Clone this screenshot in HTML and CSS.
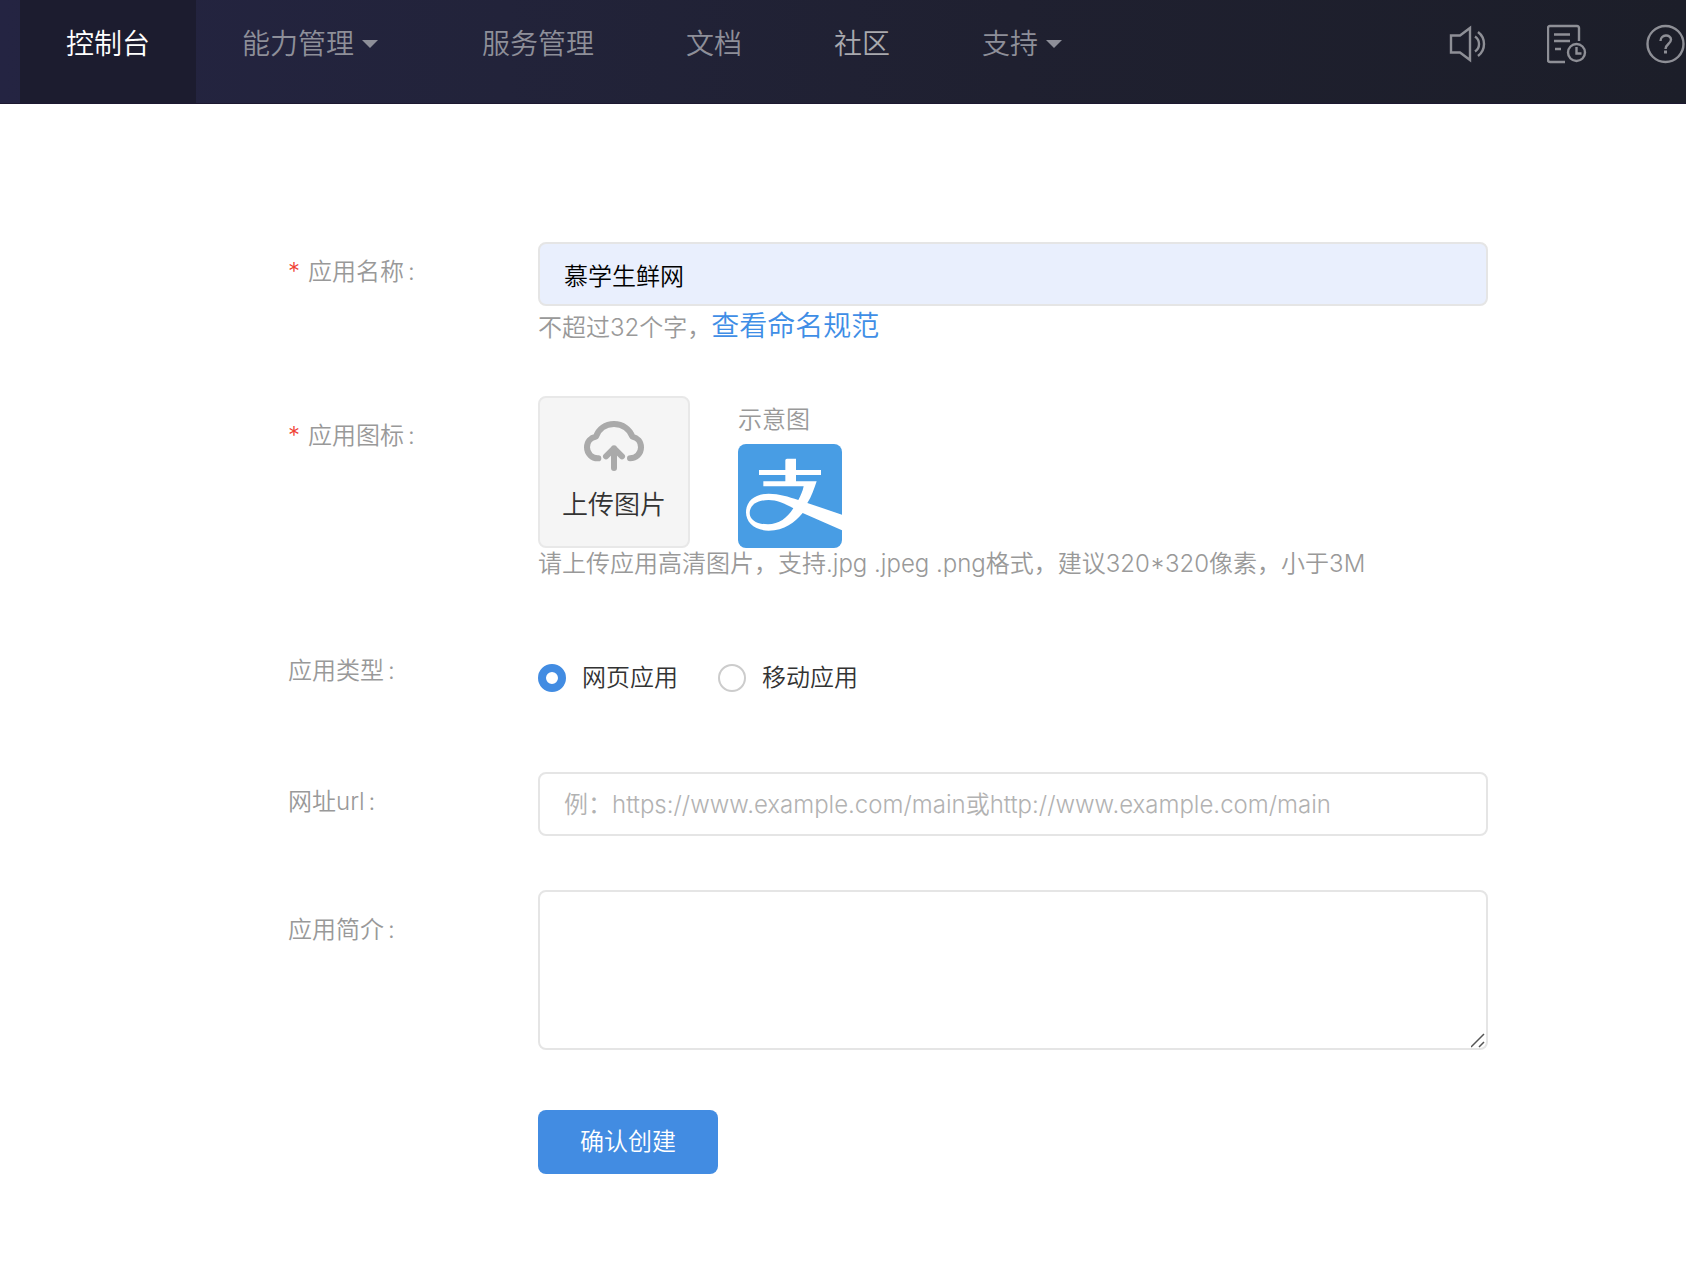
FILE: index.html
```html
<!DOCTYPE html>
<html lang="zh-CN">
<head>
<meta charset="utf-8">
<meta name="viewport" content="width=device-width, initial-scale=1">
<title>创建应用</title>
<link rel="stylesheet" href="styles.css">
</head>
<body>
<header class="topbar">
  <nav class="nav">
    <a class="nav-item active" href="#">控制台</a>
    <a class="nav-item has-menu" href="#">能力管理<span class="caret"></span></a>
    <a class="nav-item" href="#">服务管理</a>
    <a class="nav-item" href="#">文档</a>
    <a class="nav-item bright" href="#">社区</a>
    <a class="nav-item has-menu" href="#">支持<span class="caret"></span></a>
  </nav>
  <div class="tools">
    <button class="tool" type="button" aria-label="公告">
      <svg viewBox="0 0 40 40" fill="none" stroke="currentColor" stroke-width="2.4">
        <path d="M2 11.5H11L21 4V36L11 28.5H2Z"/>
        <path d="M26 12.500A9 9 0 0 1 26 27.500M29 8A15 15 0 0 1 29 32"/>
      </svg>
    </button>
    <button class="tool" type="button" aria-label="工单">
      <svg viewBox="0 0 40 40" fill="none" stroke="currentColor" stroke-width="2.4">
        <path d="M32 17V4Q32 2 30 2H3Q1 2 1 4V36Q1 38 3 38H18" />
        <path d="M7 10.500H23M7 17H23M8 25H14"/>
        <circle cx="29.500" cy="28.500" r="8.500"/>
        <path d="M29.500 23V29.500H34.500"/>
      </svg>
    </button>
    <button class="tool" type="button" aria-label="帮助">
      <svg viewBox="0 0 40 40" fill="none" stroke="currentColor" stroke-width="2.4">
        <circle cx="20.500" cy="20" r="18"/>
        <path d="M15.500 17C15.500 10 26 10 26 15.500C26 20 20.500 20 20.500 25"/>
        <path d="M20.500 26.500V29.500" stroke-width="3"/>
      </svg>
    </button>
  </div>
</header>

<main>
  <form class="form">
    <div class="row row-name">
      <label class="label" for="name"><span class="star">*</span>应用名称<span class="colon">:</span></label>
      <div class="field">
        <input class="input filled" id="name" type="text" value="慕学生鲜网">
        <p class="hint hint-name">不超过32个字，<a class="link" href="#">查看命名规范</a></p>
      </div>
    </div>

    <div class="row row-icon">
      <label class="label low" for="upload"><span class="star">*</span>应用图标<span class="colon">:</span></label>
      <div class="field">
        <div class="pictures">
          <button class="upload" id="upload" type="button">
            <svg class="cloud" viewBox="0 0 180 150" fill="none" stroke="currentColor" stroke-width="18" stroke-linecap="round" stroke-linejoin="round">
              <path d="M43 112C24 113 9 98 9 79C9 62 20 50 36 47C44 23 64 9 90 9C116 9 138 25 145 47C160 50 171 62 171 79C171 98 157 112 138 112"/>
              <path d="M90 141V82M66 106L90 82L114 106"/>
            </svg>
            <span>上传图片</span>
          </button>
          <figure class="sample">
            <figcaption>示意图</figcaption>
            <svg class="logo" viewBox="0 0 312 312" role="img" aria-label="示意图">
              <rect width="312" height="312" fill="#489de4"/>
              <path fill="#fff" d="M142 49Q142 44 147 44H174V78H249V93H174V112H236C228 135 221 158 208 177L312 212V259L194 207C170 235 140 260 92 260C50 260 24 235 24 205C24 172 50 149 92 149C125 149 150 158 181 168C188 155 194 142 197 127H76V112H142V93H63V78H142Z"/>
              <path fill="#489de4" d="M166 193C140 178 115 168 92 168C56 168 35 184 35 207C35 229 58 241 90 241C122 241 148 222 166 193Z"/>
            </svg>
          </figure>
        </div>
        <p class="hint">请上传应用高清图片，支持.jpg .jpeg .png格式，建议320*320像素，小于3M</p>
      </div>
    </div>

    <div class="row row-type" role="radiogroup" aria-labelledby="type-label">
      <span class="label" id="type-label">应用类型<span class="colon">:</span></span>
      <div class="field choices">
        <label class="choice"><input class="radio" type="radio" name="type" checked>网页应用</label>
        <label class="choice"><input class="radio" type="radio" name="type">移动应用</label>
      </div>
    </div>

    <div class="row row-url">
      <label class="label" for="url">网址url<span class="colon">:</span></label>
      <div class="field">
        <input class="input" id="url" type="text" placeholder="例：https://www.example.com/main或http://www.example.com/main">
      </div>
    </div>

    <div class="row row-intro">
      <label class="label low" for="intro">应用简介<span class="colon">:</span></label>
      <div class="field">
        <textarea class="input area" id="intro"></textarea>
      </div>
    </div>

    <div class="row">
      <div class="label"></div>
      <button class="submit" type="submit">确认创建</button>
    </div>
  </form>
</main>
</body>
</html>
```

FILE: styles.css
```css
* {
  box-sizing: border-box;
}

body {
  margin: 0;
  background: #fff;
  color: #999;
  font-family: Inter, "Noto Sans CJK SC", sans-serif;
  font-size: 24px;
  font-weight: 350;
  line-height: 32px;
}

button,
input,
textarea {
  font: inherit;
}

p,
figure {
  margin: 0;
}

a {
  text-decoration: none;
}

/* Top bar */

.topbar {
  display: flex;
  justify-content: space-between;
  height: 104px;
  padding-left: 20px;
  border-bottom: 1px solid #1c1830;
  background: linear-gradient(90deg, #242442 0, #22233a 30%, #1f2030 60%, #1c1e29 100%);
  overflow: hidden;
}

.nav {
  display: flex;
}

.nav-item {
  display: flex;
  align-items: center;
  padding: 0 46px 16px;
  color: #8e8f99;
  font-size: 28px;
  line-height: 40px;
  white-space: nowrap;
}

.nav-item.active {
  background: #1c1c2f;
  color: #fff;
}

.nav-item.bright {
  color: #a9a9ae;
}

.nav-item.has-menu {
  padding-right: 58px;
}

.caret {
  margin-left: 8px;
  border: 8px solid transparent;
  border-top-color: currentColor;
  border-bottom: 0;
}

.tools {
  display: flex;
  gap: 58px;
  padding: 0 1px 16px 0;
}

.tool {
  display: flex;
  align-items: center;
  padding: 0;
  border: 0;
  background: none;
  color: #8e8f96;
}

.tool svg {
  width: 40px;
  height: 40px;
}

/* Form */

.form {
  padding: 138px 198px 104px 288px;
}

.row {
  display: flex;
  align-items: flex-start;
}

.row-name {
  margin-bottom: 50px;
}

.row-icon {
  margin-bottom: 61px;
}

.row-type {
  margin-bottom: 57px;
}

.row-url {
  margin-bottom: 54px;
}

.row-intro {
  margin-bottom: 60px;
}

.label {
  flex: none;
  width: 250px;
  line-height: 60px;
}

.label.low {
  padding-top: 10px;
}

.star {
  margin-right: 8px;
  color: #f04134;
}

.colon {
  margin-left: 4px;
}

.field {
  flex: 1;
  min-width: 0;
}

.input {
  display: block;
  width: 100%;
  height: 64px;
  padding: 0 24px;
  border: 2px solid #e5e5e5;
  border-radius: 8px;
  outline: 0;
  background: #fff;
  color: #000;
}

.input.filled {
  background: #e9effd;
}

.input::placeholder {
  color: #b2b2b2;
  opacity: 1;
}

.area {
  height: 160px;
  padding: 16px 24px;
  resize: vertical;
}

.area::-webkit-resizer {
  background: url("data:image/svg+xml,%3Csvg xmlns='http://www.w3.org/2000/svg' width='15' height='15' fill='none' stroke='%23555' stroke-width='1.5'%3E%3Cpath d='M0 14L13 1M8 14L13 9'/%3E%3C/svg%3E") no-repeat;
}

.hint {
  line-height: 32px;
}

.hint-name {
  height: 40px;
  line-height: 40px;
}

.link {
  color: #3f8ee6;
  font-size: 28px;
}

.pictures {
  display: flex;
  gap: 48px;
}

.upload {
  display: flex;
  flex-direction: column;
  align-items: center;
  gap: 14px;
  width: 152px;
  height: 152px;
  padding: 23px 0 0;
  border: 2px solid #e8e8e8;
  border-radius: 8px;
  background: #f5f5f5;
  color: #333;
  font-size: 26px;
  line-height: 40px;
}

.cloud {
  width: 60px;
  height: 50px;
  color: #aaa;
}

.sample {
  display: flex;
  flex-direction: column;
  justify-content: flex-end;
  gap: 4px;
  line-height: 40px;
}

.logo {
  width: 104px;
  height: 104px;
  border-radius: 8px;
}

.choices {
  display: flex;
  gap: 40px;
  height: 74px;
}

.choice {
  display: flex;
  align-items: center;
  gap: 16px;
  color: #333;
}

.radio {
  width: 28px;
  height: 28px;
  margin: 0;
  border: 2px solid #ccc;
  border-radius: 50%;
  background: #fff;
  appearance: none;
}

.radio:checked {
  border: 8px solid #428ce2;
}

.submit {
  height: 64px;
  padding: 0 42px;
  border: 0;
  border-radius: 8px;
  background: #428ce2;
  color: #fff;
}
```
